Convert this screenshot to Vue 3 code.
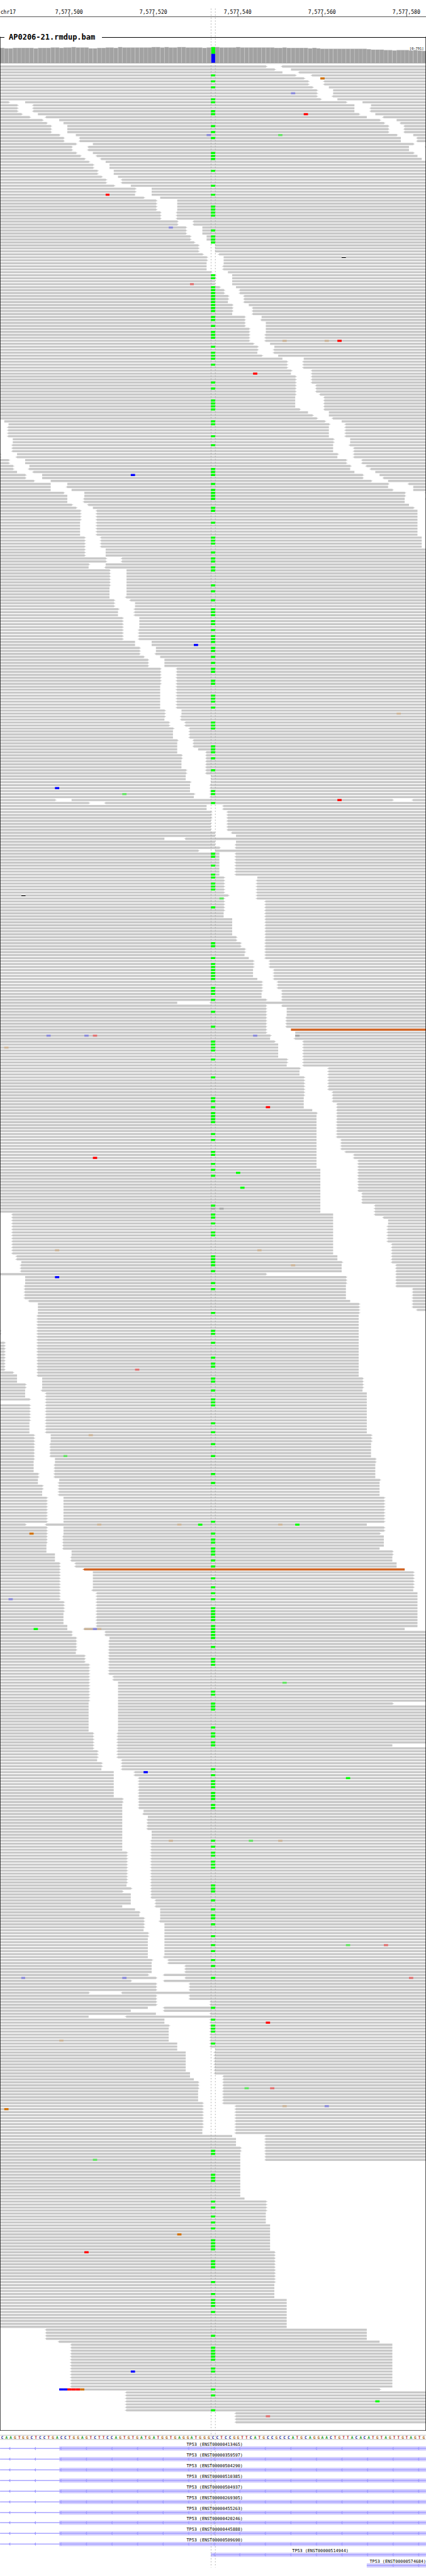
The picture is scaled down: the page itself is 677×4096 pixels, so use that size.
<script setup>
const BASES = 101
const BASE_W = 1000 / BASES
const ROW_H = 7
const VARIANT_BASE = 50

const edge = (base) => Math.round(base * BASE_W)

const ticks = [
  { x: 162, label: '7,577,500' },
  { x: 360, label: '7,577,520' },
  { x: 558, label: '7,577,540' },
  { x: 756, label: '7,577,560' },
  { x: 954, label: '7,577,580' },
]

// Coverage: top of each bar as "top*number of bases".
const coverage = `113 114*2 113*5 114 113*3 112*2 113 112*2 111 112*3 114*2 113*2 112*2 113 111
  112*7 111*2 112 111 112*2 111*2 112*4 113 112 111 111 112*4 111 112*8 113*2 112 113*5 114 113 114
  115*11 116 117*3 118*2 119 118*3 119 118 119 120`
  .trim()
  .split(/\s+/)
  .flatMap((token) => {
    const [top, count = 1] = token.split('*').map(Number)
    return Array(count).fill(top)
  })
  .map((top, i) => ({ top, x: edge(i), w: edge(i + 1) - edge(i) }))

// Packed read rows. Each row lists the gaps between reads as "end-start" in bases;
// ">" and "<" are strand arrows, "*n" repeats the row.
const packedRows = `63>-<67/65>-69/67-<71/70>-<74/72>-76/73>-<77*2/74>-78/75>-79*2/75>-<79/76>-80
2>-6 82>-86/4>-<8 84-88/4>-<8 84-<88*2/5>-9 85>-89/7>-<11 87-<91/10>-14 90>-94/11>-15 91>-<95
12>-16 92>-<96*3/14>-18 94>-98/15>-<19 95-<99*2/18>-22 98>-101/17>-<21 97-<101/17>-<21 97-101
18>-22 98>-101/19>-<23 99-101/20>-<24 100-101/21>-25/22>-26*2/23>-27*2/24>-28/25>-<29*2/27>-31
32>-36*2/32-36/34>-38/37>-42*4/38>-<42*3/42>-<46*2/44>-48*3/45>-49*2/46>-50/47>-51*3/48>-<52
49>-53*2/49-53/49-<53*2/50>-54/51>-55*2/51-55*2/52>-56/53>-<57*2/54>-<58*2/54-<58/55>-59
55>-<60*2/55-<60/58>-62/58>-<62/58>-63*2/59>-63*2/59>-<63*3/60>-64/61>-65/61>-<65/61-<65/62>-66
67-72/68>-<72*3/69>-<74/69-<74/70>-<74*3/70>-<75*3/70>-<76/70-<77*4/71>-<77/73-78/74>-78/75>-<79
0-1 77>-81/0-2 78>-<82/0-<2 78-<82*4/0-3 79>-83*2/0-<3 79-<83/0-<3 79-<84*2/0>-4 80>-<84
0>-<4 80-<84/2>-6 82>-<86*2/3>-7 83>-<87/3>-<7 83-<88/4-<8 84-89/6>-10 86>-90/6>-10 86>-<91
8>-12 88>-92/12-16 92>-<97/12-<16 92-98/12-17 93>-98/15>-20 96>-<101/16-20 96>-101
16-<20 96-<101/16-<20 96-101/17>-<21 97-101/18>-22 98>-101/19>-<23 99-101*4/19-<23 99-101*5
20>-<24 100-101*4/20>-25*3/25>-<29*2/21>-25/21-<25/26>-30*6/26-30*3/26-<30/27>-<31/27>-32*2
28>-<32/28-<32*2/29>-33*4/29>-<33*4/32-36*2/33>-37*2/33>-<37/34>-38/35>-39*3/38>-<42*6/38-<42*8
39>-43*2/39>-<43/39-<43/40>-<44*2/41>-<45/41-<45*3/42>-<46/42-<46*2/42-47/42-<49/43>-<49*2
43-<49*3/44>-<49*2/44-50*2/45>-50/45-<50*3/46>-<50/46-<50/13>-17 93>-<98/21>-<25/49-<53*2
50>-<54*3/50-<54*4/51-<55/51-56/39-<44/51-56/51-<56/52>-<56/47>-51/52-<56*8/53>-61/53>-<61*5
54>-<61/53>-<61/53>-<63*4/53-<63*2/55-<63*6/56>-<63*2/57>-<63*2/58>-<63*2/58-<63/59-<63
60>-<64*3/60-<65*3/61-<65/62>-<66*3/62>-<67/62-<67*2/63>-<67/42-<50/63>-<67/63>-68*3/63>-<68*4
63>-69/63>-70/64>-70/64-<70/65>-<72/66-<72*5/68>-<72*2/68-<72/71>-<78/71-<78*2/72>-<78*5
72>-<79*2/72-<79*2/72-<80*2/74-<80/75>-<80/75-<80*8/75-<81*4/75-<82/75-<84*2/75-<85*3/76-<85*8
76-<86*4/76-<89*3/0-<3 79-<89/0-<3 79-<91/0-<3 79-92*2/0-<3 79-<92*6/0-<3 79-<93*4
0-<4 80-<93*2/0-5 81>-<93/0-<5 81-<94*3/63>-<94/0-6 82>-<94*3/0-<6 82-<94/0-<6 82-<98*4
0-<7 83-<98/0-9 85>-<98*2/0-9 85>-<99/0-9 85>-101/0-<9 85-101*5/0>-<9 85-101*2/0-<9 85-101*2
1>-<9 85-101*10/3>-<9 85-101/4-<9 85-101/4-10 86>-101*2/6>-10 86>-101*2/6-<10 86-101
6-<11 87-101*2/7>-<11 87-101/0-<11 87-101/7>-<11 87-101*6/7-<11 87-101*4/8>-12 88>-101*3
8>-<12 88-101*5/8>-13 89>-101/8-13 89>-101/8-<13 89-101*3/9>-<13 89-101*2/9-14 90>-101
9-<14 90-101/10>-<14 90-101*2/10-<14 90-101*2/11>-15 91>-101*9/6>-<11 87-101/11>-15 91>-101*2
11>-15 90>-101/11>-<15 91-101*3/11-<15 91-101/11-<15 90-101/11-17 93>-101/13-17 93>-101
13-<17 93-101*2/14>-<18 94-101*2/14>-<20 96-101/14>-22 98>-101*6/14>-<22 98-101
14>-<23 99-101*3/15>-<23 99-101*4/15-<23 99-101*4/16-<23 99-101/16-<20 96-101/17>-<25*2/18>-26
18>-<26*4/18-<26/20>-<26*3/21>-<26*4/21>-<27*2/21>-28*7/21-28 93>-101/21-28*9/22>-<28*4
22>-<28 93-101/22>-<28/23>-<28*3/23-<29/24>-<29*2/24-<29/27-<32*2/27-<33*7/29>-<33*2/29-<33*2
29-34/29-<34/29-35/29-<35*4/29-36*3/29-<36*4/30>-<36*11/30-<36/31>-<36/29>-<36/31-<36*2
31-<37*2/29-<37/32-38/33>-38/33-38/34>-38/34>-<38/34>-39*2/34-39/35>-39*2/35-39*6/35-<39
36>-<40/36-<40/36-<44*3/35>-<39/37>-<44/31>-<39/37>-<45*3/21>-<29/37>-<45*2/37>-<50*2/35-<39
31-<39/37-<50/21-<30/39-<50*2/40>-<50/40-<50*5/42-<50*2/42-51/44-<51*7/45-<51/45-<53/46-<53
47>-<53*3/47-<53*4/48>-<53/48>-<56*8/48-<56*2/55-<63/56-<63*3/57>-<63*2/57-<63*3/57-101*12
58-101/63>-101*4/63-101*4/64-101*9/65>-101*11/65-101*5/68-101*10/0-<11 87-101*4/0-<14 90-101
0-<17 93-101*15/0-14 90>-101/0-<30*7/0-<56*4`

const rows = packedRows.split(/[/\n]/).flatMap((entry) => {
  const [gaps, count = 1] = entry.trim().split('*')
  const reads = []
  let start = 0
  let left = false
  for (const gap of gaps.split(' ')) {
    const [, end, right, nextLeft, next] = gap.match(/^(\d+)(>?)-(<?)(\d+)$/)
    if (+end > start || right) reads.push({ start, end: +end, left, right: !!right })
    start = +next
    left = !!nextLeft
  }
  if (start < BASES || left) reads.push({ start, end: BASES, left, right: false })
  return Array(+count).fill(reads)
})

// Reads whose mate maps at an unusual distance, as "row:start".
const discordant = new Set(['323:69', '504:20'])

function readPath({ start, end, left, right }, y) {
  const a = edge(start)
  const b = edge(end)
  const head = right ? `L${b + 2} ${y + 2}h2v1h-2L${b} ${y + 5}` : 'v5'
  const tail = left ? `L${a - 2} ${y + 3}h-2v-1h2` : ''
  return `M${a} ${y}H${b}${head}H${a}${tail}Z`
}

let plainReads = ''
let discordantReads = ''
rows.forEach((reads, n) => {
  for (const read of reads) {
    const d = readPath(read, n * ROW_H)
    if (discordant.has(`${n}:${read.start}`)) discordantReads += d
    else plainReads += d
  }
})

const readsHeight = rows.length * ROW_H + 15

const variantRows = [
  3, 5, 7, 11, 12, 15, 16, 20, 22, 24, 29, 30, 31, 35, 40, 43, 47, 48, 49, 50, 55, 57, 58, 59, 70, 71,
  74, 75, 76, 77, 78, 79, 80, 81, 82, 84, 85, 87, 89, 90, 91, 94, 96, 97, 98, 100, 106, 108, 112, 113,
  114, 115, 119, 120, 124, 127, 135, 136, 137, 140, 142, 143, 144, 145, 148, 149, 153, 158, 159, 160,
  163, 165, 166, 168, 169, 174, 176, 179, 182, 183, 184, 186, 187, 189, 191, 192, 193, 195, 196, 198,
  200, 202, 203, 206, 207, 211, 212, 213, 215, 220, 221, 222, 228, 229, 230, 232, 236, 243, 244, 247,
  264, 265, 268, 271, 272, 274, 275, 276, 282, 294, 295, 299, 301, 302, 303, 304, 305, 306, 309, 310,
  311, 313, 317, 322, 327, 328, 329, 330, 333, 339, 346, 347, 349, 351, 352, 353, 354, 358, 360, 364,
  365, 368, 370, 372, 382, 385, 386, 388, 391, 392, 399, 400, 401, 402, 404, 408, 410, 418, 424, 425,
  428, 433, 435, 436, 440, 441, 444, 447, 448, 449, 455, 458, 462, 466, 472, 475, 488, 492, 494, 495,
  497, 498, 499, 501, 503, 507, 510, 512, 514, 517, 518, 519, 520, 521, 523, 524, 525, 526, 527, 530,
  534, 535, 536, 545, 546, 549, 550, 551, 557, 559, 560, 562, 563, 571, 573, 575, 576, 577, 579, 580,
  581, 583, 584, 595, 597, 599, 600, 602, 603, 604, 610, 611, 612, 615, 618, 620, 621, 623, 627, 630,
  632, 635, 637, 641, 651, 655, 657, 658, 659, 663, 699, 700, 707, 708, 709, 716, 718, 721, 723, 725,
  729, 730, 731, 732, 736, 737, 738, 743, 747, 749, 750, 751, 753, 761, 765, 766, 767, 768, 769, 772,
  773, 779, 781, 786,
]

const variantX = edge(VARIANT_BASE)
const variantW = edge(VARIANT_BASE + 1) - variantX
const variantPath = variantRows.map((n) => `M${variantX} ${n * ROW_H}h${variantW}v5h${-variantW}Z`).join('')

// Other mismatches, "row:base:kind". Upper case is a confident call, lower case a low-quality one.
const mismatches = `4:76:G 9:69:c 16:72:T 23:49:c 23:66:a 43:25:T 54:40:c 73:45:t 92:67:g 92:77:g 92:80:T
  103:60:T 137:31:C 194:46:C 217:94:g 242:13:C 244:29:a 246:80:T 279:52:a 325:11:c 325:20:c 325:22:t
  325:60:c 325:70:n 329:1:g 349:63:T 366:22:T 371:56:A 376:57:A 383:50:n 383:52:n 397:13:g 397:61:g
  402:69:g 406:13:C 437:32:t 459:21:g 466:15:a 489:23:g 489:42:g 489:47:A 489:66:g 489:70:A 492:7:G
  514:2:c 524:8:A 524:20:g 524:21:g 524:22:c 524:23:g 542:67:a 572:34:C 574:82:A 595:40:g 595:59:a
  595:66:g 630:82:a 630:91:t 641:5:c 641:29:c 641:97:t 656:63:T 662:14:g 678:58:a 678:64:t 684:67:g
  684:77:c 685:1:G 702:22:a 727:42:G 733:20:T 773:31:C 779:14:C 779:15:C 779:16:T 779:17:T 779:18:T
  779:19:G 783:89:A 788:63:t`
  .trim()
  .split(/\s+/)
  .map((token) => {
    const [n, base, kind] = token.split(':')
    const x = edge(+base)
    return { y: n * ROW_H, x, w: edge(+base + 1) - x, kind }
  })

const markColors = {
  A: '#00ff00',
  C: '#0000ff',
  G: '#d17105',
  T: '#ff0000',
  a: '#64e464',
  c: '#8c8cda',
  g: '#ccb59a',
  t: '#e07474',
  n: '#a9a9a9',
}

const deletions = [
  { n: 64, base: 81 },
  { n: 278, base: 5 },
].map(({ n, base }) => ({ y: n * ROW_H, x: edge(base), w: 10 }))

const sequence = [
  ...('CAAGTGGCTCCTGACCTGGAGTCTTCCAGTGTGATGATGGTGAGGATGGG' +
    'CCTCCGGTTCATGCCGCCCATGCAGGAACTGTTACACATGTAGTTGTAGTG'),
].map((letter, i) => ({ letter, x: Math.round((i + 0.5) * BASE_W) }))

const exon = (id, rest = {}) => ({ name: `TP53 (${id})`, from: 0, box: 139, label: 504, ...rest })
const transcripts = [
  exon('ENST00000413465'),
  exon('ENST00000359597'),
  exon('ENST00000504290'),
  exon('ENST00000510385'),
  exon('ENST00000504937'),
  exon('ENST00000269305'),
  exon('ENST00000455263'),
  exon('ENST00000420246'),
  exon('ENST00000445888'),
  exon('ENST00000509690'),
  exon('ENST00000514944', { from: 495, box: 495, label: 752 }),
  exon('ENST00000574684', { from: 861, box: 861, label: 934 }),
].map((t) => ({
  ...t,
  arrows: Array.from({ length: 17 }, (_, k) => 24 + 60 * k)
    .filter((x) => x - 4 >= t.from)
    .map((x) => `M${x - 4} 18L${x} 14V22Z`)
    .join(''),
}))
</script>

<template>
  <main class="browser">
    <svg class="track" viewBox="0 0 1000 77" role="img" aria-label="Position ruler">
      <text class="axis" x="1" y="32">chr17</text>
      <rect x="0" y="39" width="1000" height="1" />
      <g v-for="t in ticks" :key="t.x">
        <text class="axis middle" :x="t.x" y="32">{{ t.label }}</text>
        <rect :x="t.x" y="32" width="1" height="7" />
      </g>
    </svg>

    <fieldset class="sample">
      <legend>AP0206-21.rmdup.bam</legend>

      <svg class="track coverage" viewBox="0 98 1000 56" role="img" aria-label="Coverage">
        <g v-for="(bar, i) in coverage" :key="i">
          <rect class="bar-edge" :x="bar.x" :y="bar.top" :width="bar.w" :height="148 - bar.top" />
          <rect class="bar" :x="bar.x + 1" :y="bar.top + 1" :width="bar.w - 2" :height="147 - bar.top" />
        </g>
        <rect class="base-a" :x="variantX + 1" y="111" :width="variantW - 1" height="16" />
        <rect class="base-c" :x="variantX + 1" y="127" :width="variantW - 1" height="21" />
        <rect class="floor" x="0" y="148" width="1000" height="1" />
        <text class="range" x="995" y="117">[0-791]</text>
        <rect x="0" y="87" width="1" height="67" />
        <rect x="999" y="87" width="1" height="67" />
      </svg>

      <svg
        class="track reads"
        :viewBox="`0 0 1000 ${readsHeight}`"
        preserveAspectRatio="none"
        role="img"
        aria-label="Aligned reads"
      >
        <path class="read" :d="plainReads" />
        <path class="discordant" :d="discordantReads" />
        <path class="base-a" :d="variantPath" />
        <rect
          v-for="(m, i) in mismatches"
          :key="i"
          :x="m.x"
          :y="m.y"
          :width="m.w"
          height="5"
          :fill="markColors[m.kind]"
        />
        <g v-for="d in deletions" :key="d.y">
          <rect class="blank" :x="d.x" :y="d.y" :width="d.w" height="5" />
          <rect :x="d.x" :y="d.y + 2" :width="d.w" height="2" />
        </g>
        <rect x="0" y="0" width="1" :height="readsHeight" />
        <rect x="999" y="0" width="1" :height="readsHeight" />
        <rect x="0" :y="readsHeight - 1" width="1000" height="1" />
      </svg>
    </fieldset>

    <svg class="track" viewBox="0 0 1000 24" role="img" aria-label="Reference sequence">
      <rect class="rule" x="0" y="10" width="1000" height="1" />
      <rect class="rule" x="0" y="20" width="1000" height="1" />
      <text v-for="(s, i) in sequence" :key="i" class="letter middle" :class="s.letter" :x="s.x" y="19">{{
        s.letter
      }}</text>
    </svg>

    <ul class="transcripts">
      <li v-for="t in transcripts" :key="t.name">
        <svg class="track" viewBox="0 0 1000 25">
          <rect class="exon" :x="t.box" y="13" :width="1000 - t.box" height="10" />
          <rect class="intron" :x="t.from" y="17" :width="1000 - t.from" height="2" />
          <path class="intron" :d="t.arrows" />
          <text class="gene middle" :x="t.label" y="12">{{ t.name }}</text>
        </svg>
      </li>
    </ul>

    <svg class="guides" viewBox="0 0 1000 6047" preserveAspectRatio="none" aria-hidden="true">
      <path d="M495.5 20V6027M505.5 20V6027" />
    </svg>
  </main>
</template>

<style scoped>
.browser {
  position: relative;
  padding-bottom: 12px;
  background: #fff;
  font-family: 'DejaVu Sans Mono', monospace;
  color: #000;
}

.track {
  display: block;
  width: 100%;
  height: auto;
  overflow: visible;
}

.sample {
  min-width: 0;
  margin: 0;
  padding: 0;
  border: 0 solid #000;
  border-top-width: 1px;
}

.sample legend {
  margin-left: 7px;
  padding: 0 11px 0 7px;
  font-size: 12px;
  font-weight: bold;
  line-height: 14px;
}

.coverage {
  position: relative;
  z-index: 1;
}

.reads {
  aspect-ratio: 1000 / 5555;
}

.transcripts {
  margin: 0;
  padding: 0;
  list-style: none;
}

.guides {
  position: absolute;
  inset: 0;
  width: 100%;
  height: 100%;
  pointer-events: none;
}

.guides path {
  fill: none;
  stroke: #969696;
  stroke-width: 1;
  stroke-dasharray: 3 4;
}

.middle {
  text-anchor: middle;
}

.axis {
  font-size: 12px;
}

.range {
  font-size: 8px;
  text-anchor: end;
}

.gene {
  font-size: 10px;
}

.letter {
  font-size: 9px;
  font-weight: bold;
}

.A { fill: #1f9a1f; }
.C { fill: #10108a; }
.G { fill: #b06a1c; }
.T { fill: #b01414; }

.bar { fill: #a2a2a2; }
.bar-edge { fill: #afafaf; }
.floor { fill: #787878; }
.read { fill: #c8c8c8; }
.discordant { fill: #d06424; }
.blank { fill: #fff; }
.base-a { fill: #00ff00; }
.base-c { fill: #0000ff; }
.rule { fill: #a4a8a4; }
.exon { fill: #d2cdff; }
.intron { fill: #9f9bff; }
</style>

<style>
body {
  margin: 0;
  background: #fff;
}
</style>
